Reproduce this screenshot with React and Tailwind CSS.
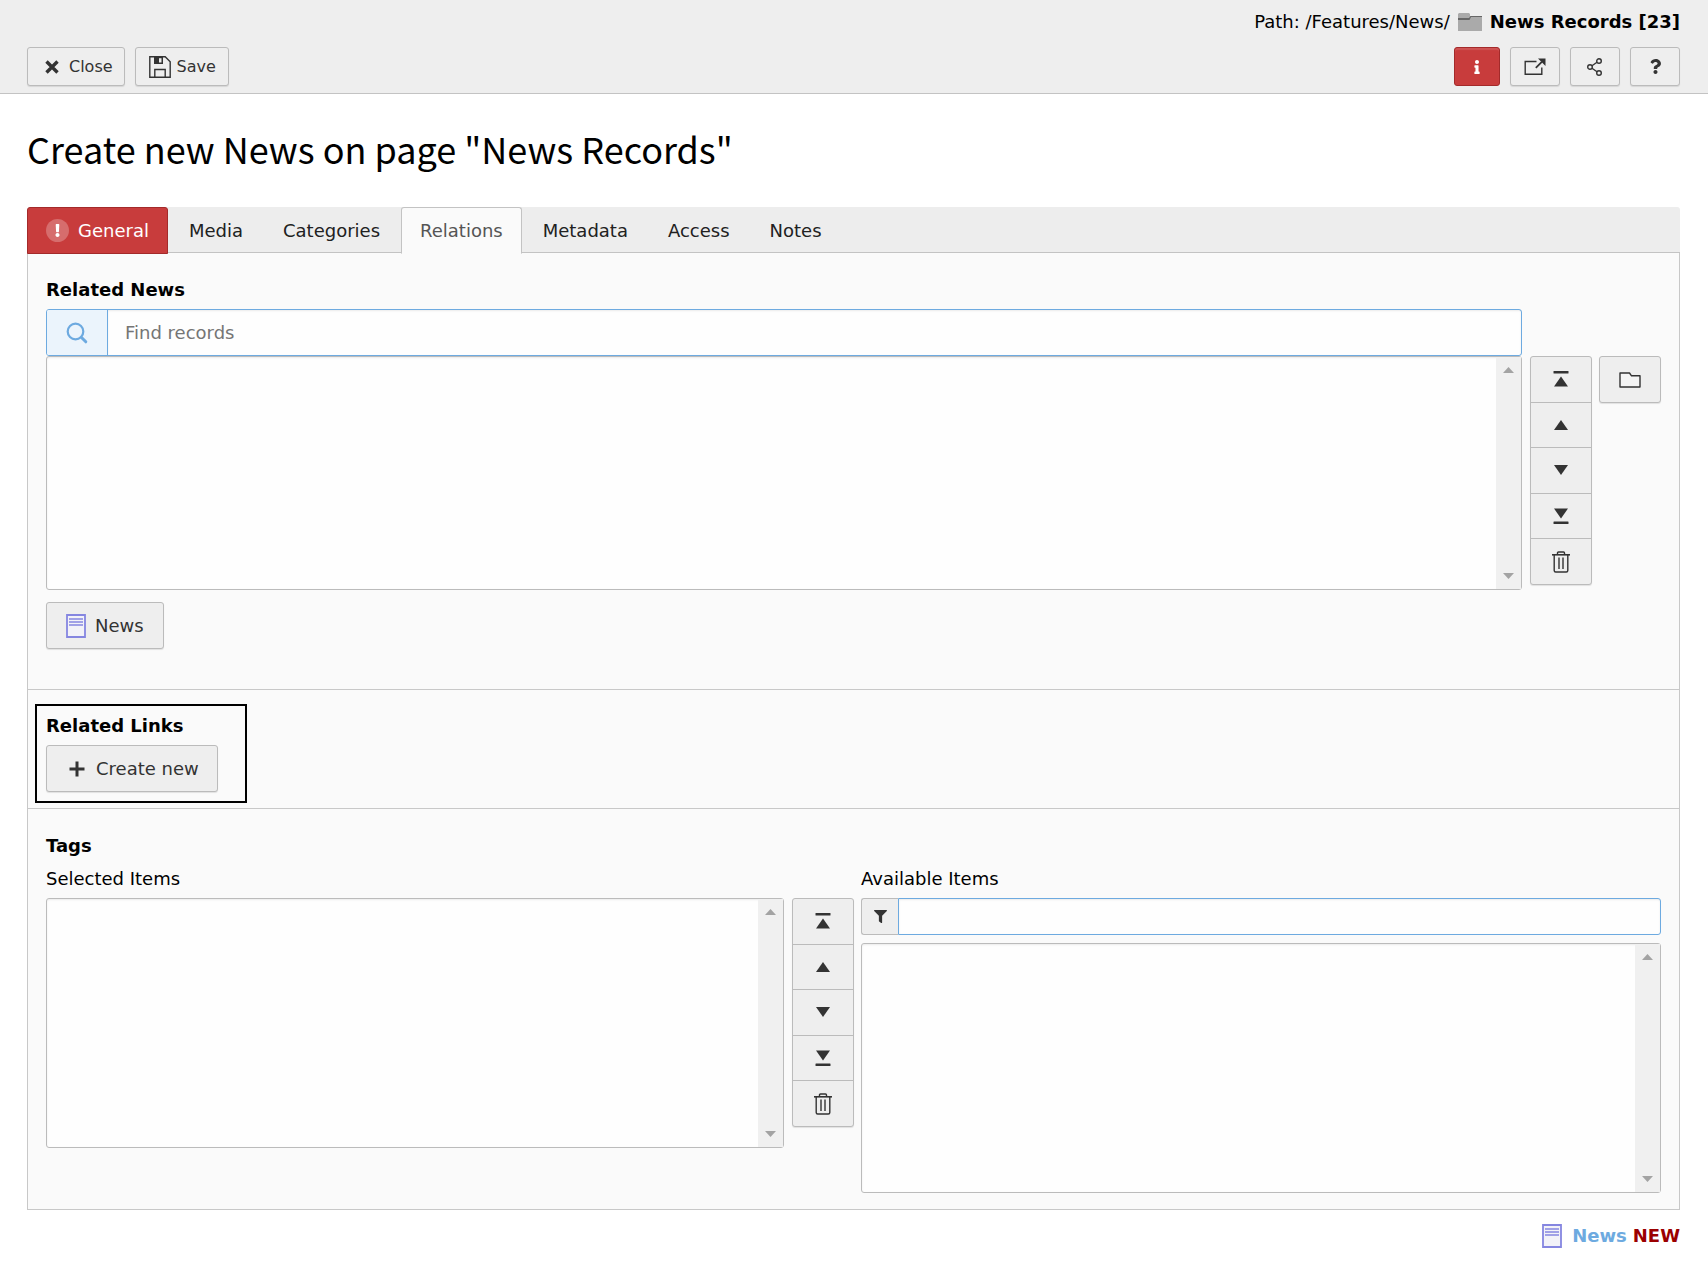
import React, { useState } from 'react'
import clsx from 'clsx'
import { FaExclamation, FaFilter, FaInfo, FaQuestion } from 'react-icons/fa'

const TABS = ['General', 'Media', 'Categories', 'Relations', 'Metadata', 'Access', 'Notes']

const BUTTON = 'flex items-center justify-center rounded-[3px] border border-[#bbb] bg-[#eee] text-[#333] shadow-[0_1px_1px_rgba(0,0,0,0.1)]'

function CloseIcon() {
  return (
    <svg width="14" height="14" viewBox="0 0 14 14" fill="none" stroke="#333" strokeWidth="3.4" aria-hidden="true">
      <path d="M1.500 1.500l11 11M12.500 1.500l-11 11" />
    </svg>
  )
}

function SaveIcon() {
  return (
    <svg width="22" height="22" viewBox="0 0 22 22" aria-hidden="true">
      <path d="M.8.8h15.400l5 5v15.400H.8z" fill="none" stroke="#333" strokeWidth="1.400" />
      <path d="M5 1h9v7H5z" fill="#333" />
      <path d="M10 2.200h2.500v4.300H10z" fill="#eee" />
      <path d="M5.800 21v-7.500h10.400V21" fill="none" stroke="#333" strokeWidth="1.400" />
    </svg>
  )
}

function PageFolderIcon() {
  return (
    <svg width="24" height="18" viewBox="0 0 24 18" aria-hidden="true">
      <path d="M0 1l1-1h10l1 1v2h12v15H0z" fill="#aaa" />
      <path d="M0 5h11l1.500-2H24v1H13l-1.500 3H0z" fill="#666" />
    </svg>
  )
}

function OpenIcon() {
  return (
    <svg width="22" height="18" viewBox="0 0 22 18" fill="none" stroke="#333" strokeWidth="1.400" aria-hidden="true">
      <path d="M12.500 3.500H1.200v12.800h16.600V9.500" />
      <path d="M11.800 9.800l6-6" strokeWidth="1.800" />
      <path d="M14 .5h7.500V8z" fill="#333" stroke="none" />
    </svg>
  )
}

function ShareIcon() {
  return (
    <svg width="16" height="18" viewBox="0 0 16 18" fill="none" stroke="#333" strokeWidth="1.400" aria-hidden="true">
      <circle cx="12" cy="3" r="2.300" />
      <circle cx="3" cy="9" r="2.300" />
      <circle cx="12" cy="15" r="2.300" />
      <path d="M5 7.800l5-3.500M5 10.200l5 3.500" />
    </svg>
  )
}

function SearchIcon() {
  return (
    <svg width="22" height="22" viewBox="0 0 22 22" fill="none" stroke="#6daae0" aria-hidden="true">
      <circle cx="9.500" cy="9.500" r="7.800" strokeWidth="2.200" />
      <path d="M15.500 15.500l4.300 4.300" strokeWidth="3" strokeLinecap="round" />
    </svg>
  )
}

function FolderIcon() {
  return (
    <svg width="22" height="16" viewBox="0 0 22 16" fill="#f4f4f4" stroke="#333" strokeWidth="1.400" strokeLinejoin="round" aria-hidden="true">
      <path d="M1 15V1h9.500l2 2.800H21V15z" />
    </svg>
  )
}

function TrashIcon() {
  return (
    <svg width="18" height="22" viewBox="0 0 18 22" fill="none" stroke="#333" strokeWidth="1.400" aria-hidden="true">
      <path d="M2.200 4v15.500q0 1.500 1.500 1.500h10.600q1.500 0 1.500-1.500V4" />
      <path d="M0 3.800h18" strokeWidth="1.600" />
      <path d="M5.500 3.500v-1.500q0-1 1-1h5q1 0 1 1v1.500M7 6.500V18M11 6.500V18" />
    </svg>
  )
}

function ArrowIcon({ down, bar }) {
  return (
    <svg width="16" height="18" viewBox="0 0 16 18" fill="#333" aria-hidden="true">
      <g transform={down ? 'rotate(180 8 9)' : undefined}>
        <path d={bar ? 'M8 6.500L15 16.500H1z' : 'M8 4L15 14H1z'} />
        {bar && <rect x="0.500" y="1" width="15" height="2.600" rx="0.500" />}
      </g>
    </svg>
  )
}

function RecordIcon() {
  return (
    <svg width="20" height="24" viewBox="0 0 20 24" fill="none" stroke="#8586e0" aria-hidden="true">
      <path d="M1 1h18v22H1z" fill="#f2f2f8" strokeWidth="1.800" />
      <path d="M3 5h14M3 8h14M3 11h14" strokeWidth="1.400" />
    </svg>
  )
}

// Multi-select list with its always visible scroll track
function ListBox({ id, label, className }) {
  return (
    <div className={clsx('flex rounded-[3px] border border-[#bbb] bg-[#fefefe] shadow-[inset_0_1px_2px_rgba(0,0,0,0.08)]', className)}>
      <select id={id} aria-label={label} multiple className="min-w-0 flex-1 appearance-none overflow-hidden bg-transparent outline-none" />
      <div className="flex w-[25px] flex-col items-center justify-between bg-[#f0f0f0] py-[10px]">
        <svg width="11" height="6" viewBox="0 0 11 6" fill="#a3a3a3" aria-hidden="true"><path d="M5.500 0L11 6H0z" /></svg>
        <svg width="11" height="6" viewBox="0 0 11 6" fill="#a3a3a3" aria-hidden="true"><path d="M5.500 6L11 0H0z" /></svg>
      </div>
    </div>
  )
}

function SortButtons() {
  const items = [
    ['Move to top', <ArrowIcon bar />],
    ['Move up', <ArrowIcon />],
    ['Move down', <ArrowIcon down />],
    ['Move to bottom', <ArrowIcon down bar />],
    ['Remove', <TrashIcon />],
  ]
  return (
    <div className="flex h-[229px] w-[62px] shrink-0 flex-col divide-y divide-[#bbb] rounded-[3px] border border-[#bbb] bg-[#eee] shadow-[0_1px_1px_rgba(0,0,0,0.1)]">
      {items.map(([title, icon]) => (
        <button key={title} type="button" aria-label={title} className="flex flex-1 items-center justify-center">
          {icon}
        </button>
      ))}
    </div>
  )
}

function Header() {
  return (
    <header className="border-b border-[#c3c3c3] bg-[#eee] px-7 pt-2 pb-[7px]">
      <div className="flex h-7 items-center justify-end gap-2 text-black">
        <span>Path: /Features/News/</span>
        <PageFolderIcon />
        <strong>News Records [23]</strong>
      </div>
      <div className="mt-[11px] flex justify-between text-base">
        <div className="-ml-px flex gap-[10px]">
          <button type="button" className={clsx(BUTTON, 'h-[39px] gap-[10px] pr-[11px] pl-[17px]')}>
            <CloseIcon />Close
          </button>
          <button type="button" className={clsx(BUTTON, 'h-[39px] gap-[6px] pr-3 pl-[13px]')}>
            <SaveIcon />Save
          </button>
        </div>
        <div className="flex gap-[10px]">
          <button type="button" aria-label="Info" className="flex h-[39px] w-[46px] items-center justify-center rounded-[3px] border border-[#a32a2a] bg-[#c83c3c] text-white shadow-[inset_0_2px_1px_rgba(255,255,255,0.12)]">
            <FaInfo size={14} />
          </button>
          <button type="button" aria-label="Open in new window" className={clsx(BUTTON, 'h-[39px] w-[50px]')}><OpenIcon /></button>
          <button type="button" aria-label="Share" className={clsx(BUTTON, 'h-[39px] w-[50px]')}><ShareIcon /></button>
          <button type="button" aria-label="Help" className={clsx(BUTTON, 'h-[39px] w-[50px]')}><FaQuestion size={15} /></button>
        </div>
      </div>
    </header>
  )
}

function Tabs({ active, onSelect }) {
  return (
    <div role="tablist" className="flex h-[46px] gap-[2px] rounded-t-[3px] border-b border-[#c3c3c3] bg-[#ededed]">
      {TABS.map(tab => (
        <button
          key={tab}
          type="button"
          role="tab"
          aria-selected={tab === active}
          onClick={() => onSelect(tab)}
          className={clsx(
            'flex h-[47px] items-center rounded-t-[3px] border px-[18px]',
            tab === 'General' && 'gap-[9px] border-[#a32a2a] bg-[#c83c3c] text-white',
            tab !== 'General' && tab === active && 'border-[#c3c3c3] border-b-[#fafafa] bg-[#fafafa] text-[#555]',
            tab !== 'General' && tab !== active && 'border-transparent text-[#212121]'
          )}
        >
          {tab === 'General' && (
            <span className="flex size-[23px] items-center justify-center rounded-full bg-white/25">
              <FaExclamation size={13} />
            </span>
          )}
          {tab}
        </button>
      ))}
    </div>
  )
}

function App() {
  const [tab, setTab] = useState('Relations')

  return (
    <div className="min-h-screen bg-white font-['DejaVu_Sans',sans-serif] text-lg leading-6 text-black">
      <Header />

      <main className="pr-7 pl-[27px]">
        <h1 className="pt-[29px] pb-[34px] font-['Noto_Sans_CJK_SC',sans-serif] text-4xl leading-[50px]">
          Create new News on page "News Records"
        </h1>

        <Tabs active={tab} onSelect={setTab} />

        <div className="border border-t-0 border-[#c8c8c8] bg-[#fafafa]">
          {/* Related news */}
          <section className="px-[18px] pt-[25px] pb-10">
            <label htmlFor="related-search" className="mb-[7px] block font-bold">Related News</label>
            <div className="flex">
              <div className="min-w-0 flex-1">
                <div className="flex h-[47px] rounded-[3px] border border-[#6daae0] bg-[#fefefe]">
                  <div className="flex w-[61px] items-center justify-center rounded-l-[2px] border-r border-[#6daae0] bg-[#ebf4fc]">
                    <SearchIcon />
                  </div>
                  <input
                    id="related-search"
                    placeholder="Find records"
                    className="min-w-0 flex-1 px-[17px] shadow-[inset_0_1px_2px_rgba(0,0,0,0.08)] outline-none placeholder:text-[#757575]"
                  />
                </div>
                <ListBox id="related-news" label="Related News" className="h-[234px]" />
              </div>
              <div className="mt-[47px] ml-2 flex gap-[7px]">
                <SortButtons />
                <button type="button" aria-label="Browse records" className={clsx(BUTTON, 'h-[47px] w-[62px]')}>
                  <FolderIcon />
                </button>
              </div>
            </div>
            <button type="button" className={clsx(BUTTON, 'mt-3 h-[47px] gap-[9px] px-[19px]')}>
              <RecordIcon />News
            </button>
          </section>

          {/* Related links */}
          <section className="border-t border-[#c8c8c8] px-[7px] pt-[14px] pb-[5px]">
            <div className="w-[212px] border-2 border-black px-[9px] pt-2 pb-[9px]">
              <h2 className="mb-[7px] font-bold">Related Links</h2>
              <button type="button" className={clsx(BUTTON, 'h-[47px] gap-[11px] pr-[18px] pl-[22px]')}>
                <svg width="16" height="16" viewBox="0 0 16 16" fill="none" stroke="#333" strokeWidth="3" aria-hidden="true">
                  <path d="M8 .5v15M.5 8h15" />
                </svg>
                Create new
              </button>
            </div>
          </section>

          {/* Tags */}
          <section className="border-t border-[#c8c8c8] px-[18px] pt-[25px] pb-4">
            <h2 className="mb-[9px] font-bold">Tags</h2>
            <div className="grid grid-cols-[101fr_100fr] gap-[7px]">
              <div>
                <label htmlFor="selected-items" className="mb-[7px] block">Selected Items</label>
                <div className="flex gap-2">
                  <ListBox id="selected-items" className="h-[250px] min-w-0 flex-1" />
                  <SortButtons />
                </div>
              </div>
              <div>
                <label htmlFor="available-items" className="mb-[7px] block">Available Items</label>
                <div className="mb-2 flex h-[37px]">
                  <span className="flex w-[37px] items-center justify-center rounded-l-[3px] border border-r-0 border-[#bbb] bg-[#eee] text-[#333]">
                    <FaFilter size={13} />
                  </span>
                  <input
                    aria-label="Filter available items"
                    className="min-w-0 flex-1 rounded-r-[3px] border border-[#6daae0] bg-[#fefefe] px-3 shadow-[inset_0_1px_2px_rgba(0,0,0,0.08)] outline-none"
                  />
                </div>
                <ListBox id="available-items" className="h-[250px]" />
              </div>
            </div>
          </section>
        </div>

        <footer className="flex items-center justify-end pt-[14px] pb-3 font-bold">
          <RecordIcon />
          <span className="mr-[6px] ml-[10px] text-[#6daae0]">News</span>
          <span className="text-[#9b0000]">NEW</span>
        </footer>
      </main>
    </div>
  )
}

export default App
